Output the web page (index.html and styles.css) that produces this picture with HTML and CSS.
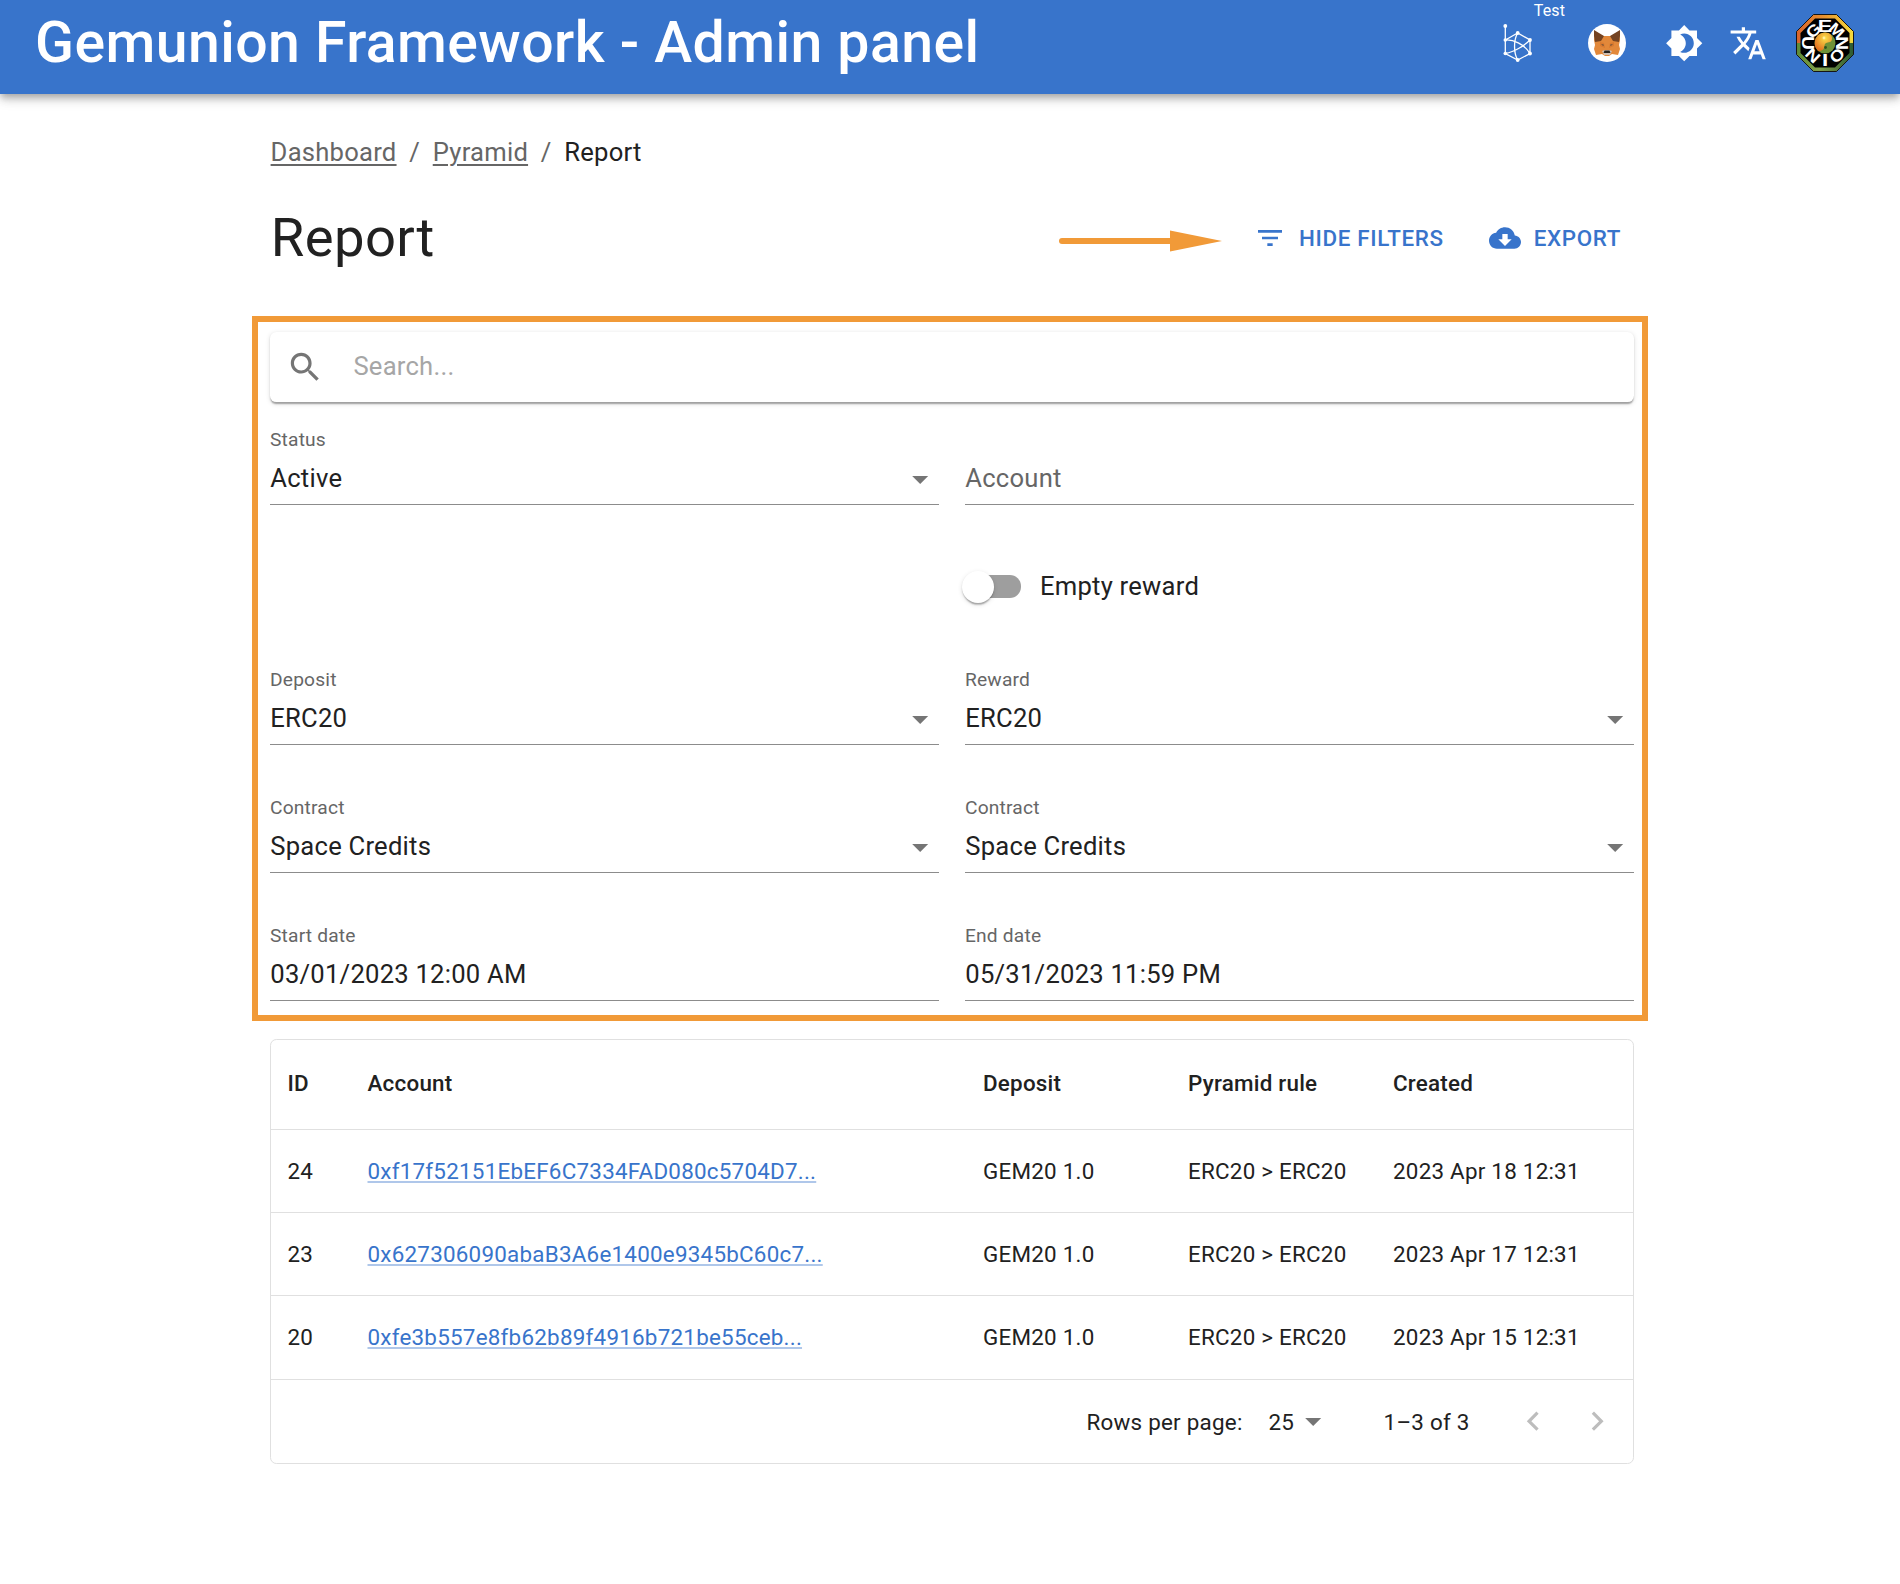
FILE: index.html
```html
<!DOCTYPE html>
<html lang="en">
<head>
<meta charset="utf-8">
<title>Gemunion Framework - Admin panel</title>
<link rel="stylesheet" href="styles.css">
</head>
<body>
<svg class="sprite" aria-hidden="true">
  <symbol id="arrow-drop-down" viewBox="0 0 24 24"><path d="M7 10l5 5 5-5z"/></symbol>
</svg>

<header class="app-bar">
  <h1 class="app-title">Gemunion Framework - Admin panel</h1>
  <div class="network">
    <svg class="network-icon" viewBox="0 0 32 40" fill="none" stroke="#fff" stroke-width="1.300">
      <path d="M3.300 3V30.500L15.700 37 28 30.500V17L15.700 10 3.300 17M3.300 17C11 16.500 22 20.500 28 30.500M28 17C23 22 13 29 3.300 30.500M15.700 10C11.500 17 11.500 30 15.700 37"/>
      <g fill="#fff" stroke="none"><circle cx="3.300" cy="3" r="1.900"/><circle cx="3.300" cy="17" r="1.800"/><circle cx="3.300" cy="30.500" r="1.800"/><circle cx="15.700" cy="10" r="1.900"/><circle cx="28" cy="17" r="1.900"/><circle cx="28" cy="30.500" r="1.900"/><circle cx="15.700" cy="37" r="1.900"/></g>
    </svg>
    <span class="network-badge">Test</span>
  </div>
  <svg class="wallet-icon" viewBox="0 0 38 38">
    <circle cx="19" cy="19" r="19" fill="#fff"/>
    <path d="M7 8l8 4h8l8-4 1 8-1 5 1 4-2 6-6-1-3 2h-4l-3-2-6 1-2-6 1-4-1-5z" fill="#e2883a"/>
    <path d="M6 6l10 6-3 5-6 1-1-6zM32 6l-10 6 3 5 6 1 1-6z" fill="#744322"/>
    <path d="M12 18l4 1 1 5-5-2zM26 18l-4 1-1 5 5-2z" fill="#d97a30"/>
    <path d="M13 20l3 .800-.800 1.200zM25 20l-3 .800.800 1.200z" fill="#5c4a3c"/>
    <path d="M14 27l3-1h4l3 1-2 4h-6z" fill="#d0bfb2"/>
    <path d="M16.500 26.500h5l1 2.500h-7z" fill="#26221f"/>
  </svg>
  <svg class="icon theme-icon" viewBox="0 0 24 24"><path d="M20 8.690V4h-4.690L12 .690 8.690 4H4v4.690L.690 12 4 15.310V20h4.690L12 23.310 15.310 20H20v-4.690L23.310 12 20 8.690zM12 18c-.890 0-1.740-.200-2.500-.550C11.560 16.500 13 14.420 13 12s-1.440-4.500-3.500-5.450C10.260 6.200 11.110 6 12 6c3.310 0 6 2.690 6 6s-2.690 6-6 6z"/></svg>
  <svg class="icon language-icon" viewBox="0 0 24 24"><path d="m12.870 15.070-2.540-2.510.030-.030c1.740-1.940 2.980-4.170 3.710-6.530H17V4h-7V2H8v2H1v1.990h11.170C11.500 7.920 10.440 9.750 9 11.350 8.070 10.320 7.300 9.190 6.690 8h-2c.730 1.630 1.730 3.170 2.980 4.560l-5.090 5.020L4 19l5-5 3.110 3.110.760-2.040zM18.500 10h-2L12 22h2l1.120-3h4.750L21 22h2l-4.500-12zm-2.620 7 1.620-4.330L19.120 17h-3.240z"/></svg>
  <svg class="avatar" viewBox="0 0 58 58">
    <defs>
      <linearGradient id="rim-top" x1="0" x2="1" y1="0" y2="0"><stop offset="0" stop-color="#d9622b"/><stop offset=".5" stop-color="#e8942f"/><stop offset="1" stop-color="#f5dc3c"/></linearGradient>
      <linearGradient id="rim-bottom" x1="0" x2="1" y1="0" y2="0"><stop offset="0" stop-color="#5d8a35"/><stop offset=".4" stop-color="#83a04b"/><stop offset="1" stop-color="#2c5a31"/></linearGradient>
      <radialGradient id="yang" cx=".6" cy=".3" r=".7"><stop offset="0" stop-color="#fbe04a"/><stop offset="1" stop-color="#e2711f"/></radialGradient>
    </defs>
    <path d="M17.500 .500h23L57.500 17.500v23L40.500 57.500h-23L.500 40.500v-23z" fill="url(#rim-bottom)"/>
    <path d="M.500 29V17.500L17.500 .500h23L57.500 17.500V29z" fill="url(#rim-top)"/>
    <path d="M17.500 .500h23L57.500 17.500v23L40.500 57.500h-23L.500 40.500v-23z" fill="none" stroke="#151515"/>
    <path d="M19 4.500h20L53.500 19v20L39 53.500H19L4.500 39V19z" fill="#000"/>
    <g class="avatar-letters">
      <text transform="rotate(-43 29 29) translate(29 17.500) scale(1.150 1)">G</text>
      <text transform="translate(29 17.500) scale(1.350 1)">E</text>
      <text transform="rotate(43 29 29) translate(29 17.500) scale(1.100 1)">M</text>
      <text transform="rotate(90 29 29) translate(29 52) scale(1.200 1)">U</text>
      <text transform="rotate(44 29 29) translate(29 52) scale(1.200 1)">N</text>
      <text transform="translate(29 52) scale(1.400 1)">I</text>
      <text transform="rotate(-44 29 29) translate(29 52) scale(1.150 1)">O</text>
      <text transform="rotate(-90 29 29) translate(29 52) scale(1.200 1)">N</text>
    </g>
    <circle cx="29" cy="29" r="10.500" fill="#6f9237"/>
    <path d="M32.500 19.100A10.500 10.500 0 0 0 22.500 37.200C26 37 28.500 35 28.500 32S31 28.500 34 28 37 21 32.500 19.100z" fill="url(#yang)"/>
    <circle cx="28" cy="24" r="1.400" fill="#fff0a0"/><circle cx="29.500" cy="33.500" r="1.400" fill="#2f5220"/>
  </svg>
</header>

<main class="page">
  <nav class="breadcrumbs">
    <a href="#">Dashboard</a><span class="separator">/</span><a href="#">Pyramid</a><span class="separator">/</span><span class="current">Report</span>
  </nav>

  <div class="page-header">
    <h2 class="page-title">Report</h2>
    <svg class="pointer" viewBox="0 0 163 22"><path d="M3 11H115" stroke="#f19a38" stroke-width="6" stroke-linecap="round"/><path d="M111 .500L163 11 111 21.500z" fill="#f19a38"/></svg>
    <button class="action action-filter"><svg class="action-icon" viewBox="0 0 24 24"><path d="M10 18h4v-2h-4v2zM3 6v2h18V6H3zm3 7h12v-2H6v2z"/></svg>Hide filters</button>
    <button class="action action-export"><svg class="action-icon" viewBox="0 0 24 24"><path d="M19.350 10.040C18.670 6.590 15.640 4 12 4 9.110 4 6.600 5.640 5.350 8.040 2.340 8.360 0 10.910 0 14c0 3.310 2.690 6 6 6h13c2.760 0 5-2.240 5-5 0-2.640-2.050-4.780-4.650-4.960zM17 13l-5 5-5-5h3V9h4v4h3z"/></svg>Export</button>
  </div>

  <section class="filters">
    <div class="search">
      <svg class="search-icon" viewBox="0 0 24 24"><path d="M15.500 14h-.790l-.280-.270C15.410 12.590 16 11.110 16 9.500 16 5.910 13.090 3 9.500 3S3 5.910 3 9.500 5.910 16 9.500 16c1.610 0 3.090-.590 4.230-1.570l.270.280v.790l5 4.990L20.490 19l-4.990-5zm-6 0C7.010 14 5 11.990 5 9.500S7.010 5 9.500 5 14 7.010 14 9.500 11.990 14 9.500 14z"/></svg>
      <span class="search-placeholder">Search...</span>
    </div>
    <div class="filter-grid">
      <div class="field"><span class="label">Status</span><div class="value">Active<svg class="caret"><use href="#arrow-drop-down"/></svg></div></div>
      <div class="field"><div class="value empty">Account</div></div>
      <label class="toggle"><span class="switch"><span class="thumb"></span></span><span class="toggle-text">Empty reward</span></label>
      <div class="field"><span class="label">Deposit</span><div class="value">ERC20<svg class="caret"><use href="#arrow-drop-down"/></svg></div></div>
      <div class="field"><span class="label">Reward</span><div class="value">ERC20<svg class="caret"><use href="#arrow-drop-down"/></svg></div></div>
      <div class="field"><span class="label">Contract</span><div class="value">Space Credits<svg class="caret"><use href="#arrow-drop-down"/></svg></div></div>
      <div class="field"><span class="label">Contract</span><div class="value">Space Credits<svg class="caret"><use href="#arrow-drop-down"/></svg></div></div>
      <div class="field"><span class="label">Start date</span><div class="value">03/01/2023 12:00 AM</div></div>
      <div class="field"><span class="label">End date</span><div class="value">05/31/2023 11:59 PM</div></div>
    </div>
  </section>

  <section class="data-grid">
    <div class="row head"><span>ID</span><span>Account</span><span>Deposit</span><span>Pyramid rule</span><span>Created</span></div>
    <div class="row"><span>24</span><span><a class="address" href="#">0xf17f52151EbEF6C7334FAD080c5704D7...</a></span><span>GEM20 1.0</span><span>ERC20 &gt; ERC20</span><span>2023 Apr 18 12:31</span></div>
    <div class="row"><span>23</span><span><a class="address" href="#">0x627306090abaB3A6e1400e9345bC60c7...</a></span><span>GEM20 1.0</span><span>ERC20 &gt; ERC20</span><span>2023 Apr 17 12:31</span></div>
    <div class="row last"><span>20</span><span><a class="address" href="#">0xfe3b557e8fb62b89f4916b721be55ceb...</a></span><span>GEM20 1.0</span><span>ERC20 &gt; ERC20</span><span>2023 Apr 15 12:31</span></div>
    <div class="pagination">
      <span class="rows-label">Rows per page:</span>
      <span class="rows-count">25</span>
      <svg class="caret rows-caret"><use href="#arrow-drop-down"/></svg>
      <span class="range">1–3 of 3</span>
      <svg class="page-arrow" viewBox="0 0 24 24"><path d="M15.410 7.410L14 6l-6 6 6 6 1.410-1.410L10.830 12z"/></svg>
      <svg class="page-arrow next" viewBox="0 0 24 24"><path d="M10 6L8.590 7.410 13.170 12l-4.580 4.590L10 18l6-6z"/></svg>
    </div>
  </section>
</main>
</body>
</html>
```
FILE: styles.css
```css
* { box-sizing: border-box; }

body {
  margin: 0;
  background: #fff;
  color: #212121;
  font-family: Roboto, "Liberation Sans", sans-serif;
  font-size: 25.6px;
  letter-spacing: 0.00938em;
}

svg { display: block; flex: none; }
.sprite { position: absolute; width: 0; height: 0; }

/* App bar */
.app-bar {
  display: flex;
  align-items: center;
  height: 94px;
  padding: 0 46px 8px 35px;
  background: #3874cb;
  color: #fff;
  box-shadow: 0 3.2px 6.4px -1.6px rgba(0,0,0,.2), 0 6.4px 8px rgba(0,0,0,.14), 0 1.6px 16px rgba(0,0,0,.12);
}
.app-title {
  flex: 1;
  margin: 0;
  font-size: 57.2px;
  font-weight: 500;
  line-height: 72px;
  letter-spacing: 0.0075em;
  white-space: nowrap;
}
.network { position: relative; margin-right: 54px; }
.network-icon { width: 32px; height: 40px; }
.network-badge {
  position: absolute;
  top: -22px;
  left: 32px;
  font-size: 16px;
  line-height: 19px;
}
.wallet-icon { width: 38px; height: 38px; margin-right: 39px; }
.icon { width: 38.4px; height: 38.4px; fill: #fff; }
.theme-icon { margin-right: 25.6px; }
.language-icon { margin-right: 29px; }
.avatar { width: 58px; height: 58px; }
.avatar-letters {
  font: 700 16px "Liberation Sans", sans-serif;
  letter-spacing: 0;
  text-anchor: middle;
  fill: #fff;
}

/* Page */
.page { width: 1364px; margin-left: 270px; padding-top: 39px; }

.breadcrumbs { display: flex; height: 38px; padding-left: 0.6px; line-height: 38px; color: #666; }
.breadcrumbs a {
  color: inherit;
  text-decoration: underline;
  text-decoration-thickness: 2px;
  text-underline-offset: 3px;
}
.separator { margin: 0 12.7px; }
.current { color: #212121; }

.page-header { display: flex; align-items: center; height: 80px; margin: 27px 0 38px; }
.page-title {
  flex: 1;
  margin: 0;
  padding-left: 0.8px;
  font-size: 54.4px;
  font-weight: 400;
  line-height: 68px;
  letter-spacing: 0.00735em;
}
.pointer { width: 163px; height: 22px; margin: 5px 32px 0 0; }
.action {
  display: flex;
  align-items: center;
  padding: 0;
  border: 0;
  background: none;
  color: #3874cb;
  font: 500 22.4px/39px Roboto, "Liberation Sans", sans-serif;
  letter-spacing: 0.02857em;
  text-transform: uppercase;
}
.action-icon { width: 32px; height: 32px; margin-right: 13px; fill: currentColor; }
.action-filter { margin-right: 45px; }
.action-export { margin-right: 13px; }

/* Filters */
.filters {
  margin: 0 -14px 18px -18px;
  padding: 10px 8px 14px 12px;
  border: 6px solid #f19a38;
}
.search {
  display: flex;
  align-items: center;
  height: 70px;
  padding-left: 16px;
  border-radius: 6.4px;
  background: #fff;
  box-shadow: 0 3.2px 1.6px -1.6px rgba(0,0,0,.2), 0 1.6px 1.6px rgba(0,0,0,.14), 0 1.6px 4.8px rgba(0,0,0,.12);
}
.search-icon { width: 38.4px; height: 38.4px; margin-right: 29px; fill: #757575; }
.search-placeholder { padding-bottom: 2px; color: #a6a6a6; }

.filter-grid {
  display: grid;
  grid-template-columns: 669px 669px;
  grid-template-rows: 79px 63px 79px 79px 79px;
  gap: 49px 26px;
  margin-top: 24px;
}
.field { display: flex; flex-direction: column; justify-content: flex-end; }
.label {
  margin-bottom: 6px;
  color: #666;
  font-size: 19.2px;
  line-height: 28px;
  letter-spacing: 0.00938em;
}
.value {
  display: flex;
  align-items: center;
  justify-content: space-between;
  height: 45px;
  padding: 0 0 7px 0.3px;
  border-bottom: 1px solid #8c8c8c;
  line-height: 37px;
}
.empty { color: #666; }
.caret { width: 38.4px; height: 38.4px; fill: #757575; }
.value .caret { margin-top: 1px; }

.toggle { grid-column: 2; display: flex; align-items: center; padding-top: 2px; }
.toggle-text { padding-bottom: 2px; }
.switch {
  position: relative;
  width: 54.4px;
  height: 22.4px;
  margin: 0 19px 0 1.6px;
  border-radius: 11.2px;
  background: #9e9e9e;
}
.thumb {
  position: absolute;
  top: -4.8px;
  left: -4.8px;
  width: 32px;
  height: 32px;
  border-radius: 50%;
  background: #fff;
  box-shadow: 0 3.2px 1.6px -1.6px rgba(0,0,0,.2), 0 1.6px 1.6px rgba(0,0,0,.14), 0 1.6px 4.8px rgba(0,0,0,.12);
}

/* Data grid */
.data-grid {
  border: 1px solid #e0e0e0;
  border-radius: 6.4px;
  font-size: 22.4px;
  letter-spacing: 0.01071em;
}
.row {
  display: grid;
  grid-template-columns: 80px 615.5px 205px 205px 1fr;
  align-items: center;
  height: 83px;
  padding-left: 16.5px;
  border-bottom: 1px solid #e0e0e0;
  line-height: 32px;
}
.head { height: 90px; padding-bottom: 3px; font-weight: 500; }
.last { height: 84px; padding-bottom: 2px; }
.address {
  color: #3874cb;
  text-decoration: underline;
  text-decoration-color: #afc7ea;
  text-decoration-thickness: 2px;
  text-underline-offset: 2px;
}

.pagination { display: flex; align-items: center; justify-content: flex-end; height: 83px; padding-right: 17px; }
.rows-label { margin-right: 26px; }
.rows-caret { margin-right: 51px; }
.range { margin-right: 44px; }
.page-arrow { width: 38.4px; height: 38.4px; fill: #bdbdbd; }
.next { margin-left: 25.6px; }
```
